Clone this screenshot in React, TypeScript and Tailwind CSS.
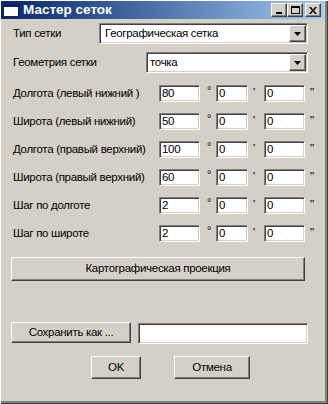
import React from "react";

const font = { fontFamily: '"Liberation Sans", Arial, sans-serif' };

const raised =
  "border border-t-white border-l-white border-r-[#404040] border-b-[#404040] shadow-[inset_-1px_-1px_0_#808080] bg-[#d4d0c8]";
const sunken =
  "border border-t-[#808080] border-l-[#808080] border-r-white border-b-white shadow-[inset_1px_1px_0_#404040,inset_-1px_-1px_0_#d4d0c8] bg-white";

function Arrow() {
  return (
    <svg width="7" height="4" viewBox="0 0 7 4">
      <path d="M0 0h7L3.5 4z" fill="#000" />
    </svg>
  );
}

function Combo({ width, text, pad }: { width: string; text: string; pad: string }) {
  return (
    <div className={`${sunken} ${width} h-[21px] flex items-center p-[1px]`}>
      <span className={`flex-1 ${pad} leading-none text-black`}>{text}</span>
      <div className={`${raised} w-[17px] h-[17px] flex items-center justify-center`}>
        <Arrow />
      </div>
    </div>
  );
}

function Field({ width, value }: { width: string; value: string }) {
  return (
    <div className={`${sunken} ${width} h-[17px] flex items-center pl-[2px] leading-none`}>
      {value}
    </div>
  );
}

const rows = [
  { label: "Долгота (левый нижний )", v: "80" },
  { label: "Широта (левый нижний)", v: "50" },
  { label: "Долгота (правый верхний)", v: "100" },
  { label: "Широта (правый верхний)", v: "60" },
  { label: "Шаг по долготе", v: "2" },
  { label: "Шаг по широте", v: "2" },
];

function TitleButton({ children, className = "" }: { children: React.ReactNode; className?: string }) {
  return (
    <div className={`${raised} w-[16px] h-[14px] flex items-center justify-center ${className}`}>
      {children}
    </div>
  );
}

export default function App() {
  return (
    <div
      style={font}
      className="w-[328px] h-[404px] bg-[#d4d0c8] text-black shadow-[inset_1px_1px_0_#fff,inset_-1px_-1px_0_#404040,inset_-3px_-3px_0_#808080] overflow-hidden"
    >
      {/* title bar */}
      <div className="mt-[1px] ml-[1px] w-[323px] h-[18px] bg-gradient-to-r from-[#0a246a] to-[#a6caf0] flex items-center">
        <svg width="16" height="14" viewBox="0 0 16 14" className="ml-[2px]">
          <rect x="0.5" y="0.5" width="15" height="13" fill="#fff" stroke="#0a246a" />
          <rect x="1" y="1" width="14" height="3" fill="#0a246a" />
        </svg>
        <span className="ml-[4px] text-white font-bold text-[13.5px] leading-none">Мастер сеток</span>
        <div className="ml-auto mr-[3px] flex items-center">
          <TitleButton>
            <div className="w-[6px] h-[2px] bg-black mt-[6px] -ml-[1px]" />
          </TitleButton>
          <TitleButton>
            <div className="w-[9px] h-[8px] border border-black border-t-2" />
          </TitleButton>
          <TitleButton className="ml-[2px]">
            <svg width="8" height="7" viewBox="0 0 8 7">
              <path d="M0 0h2l2 2.5L6 0h2L5 3.5 8 7H6L4 4.5 2 7H0l3-3.5z" fill="#000" />
            </svg>
          </TitleButton>
        </div>
      </div>

      <div className="pl-[11px] text-[11.5px] tracking-[-0.3px]">
        <div className="mt-[4px] flex items-center h-[21px]">
          <span className="ml-[2px] w-[86px]">Тип сетки</span>
          <Combo width="w-[209px]" text="Географическая сетка" pad="pl-[4px]" />
        </div>
        <div className="mt-[8px] flex items-center h-[21px]">
          <span className="ml-[2px] w-[133px]">Геометрия сетки</span>
          <Combo width="w-[162px]" text="точка" pad="pl-[2px]" />
        </div>

        <div className="mt-[12px] flex flex-col gap-[11px]">
          {rows.map((r) => (
            <div key={r.label} className="flex items-center h-[17px]">
              <span className="ml-[2px] w-[146px]">{r.label}</span>
              <Field width="w-[41px]" value={r.v} />
              <span className="w-[16px] pl-[7px] self-start -mt-[3px] text-[11px]">°</span>
              <Field width="w-[32px]" value="0" />
              <span className="w-[16px] pl-[5px] self-start -mt-[1px]">'</span>
              <Field width="w-[41px]" value="0" />
              <span className="pl-[5px] self-start -mt-[1px]">"</span>
            </div>
          ))}
        </div>

        <div className={`${raised} mt-[15px] w-[294px] h-[24px] flex items-center justify-center`}>
          Картографическая проекция
        </div>

        <div className="mt-[41px] flex items-start">
          <div className={`${raised} w-[120px] h-[21px] flex items-center justify-center`}>
            Сохранить как ...
          </div>
          <div className={`${sunken} ml-[7px] mt-[1px] w-[170px] h-[21px]`} />
        </div>

        <div className="mt-[12px] flex">
          <div className={`${raised} ml-[80px] w-[50px] h-[23px] flex items-center justify-center`}>OK</div>
          <div className={`${raised} ml-[33px] w-[76px] h-[23px] flex items-center justify-center`}>
            Отмена
          </div>
        </div>
      </div>
    </div>
  );
}
